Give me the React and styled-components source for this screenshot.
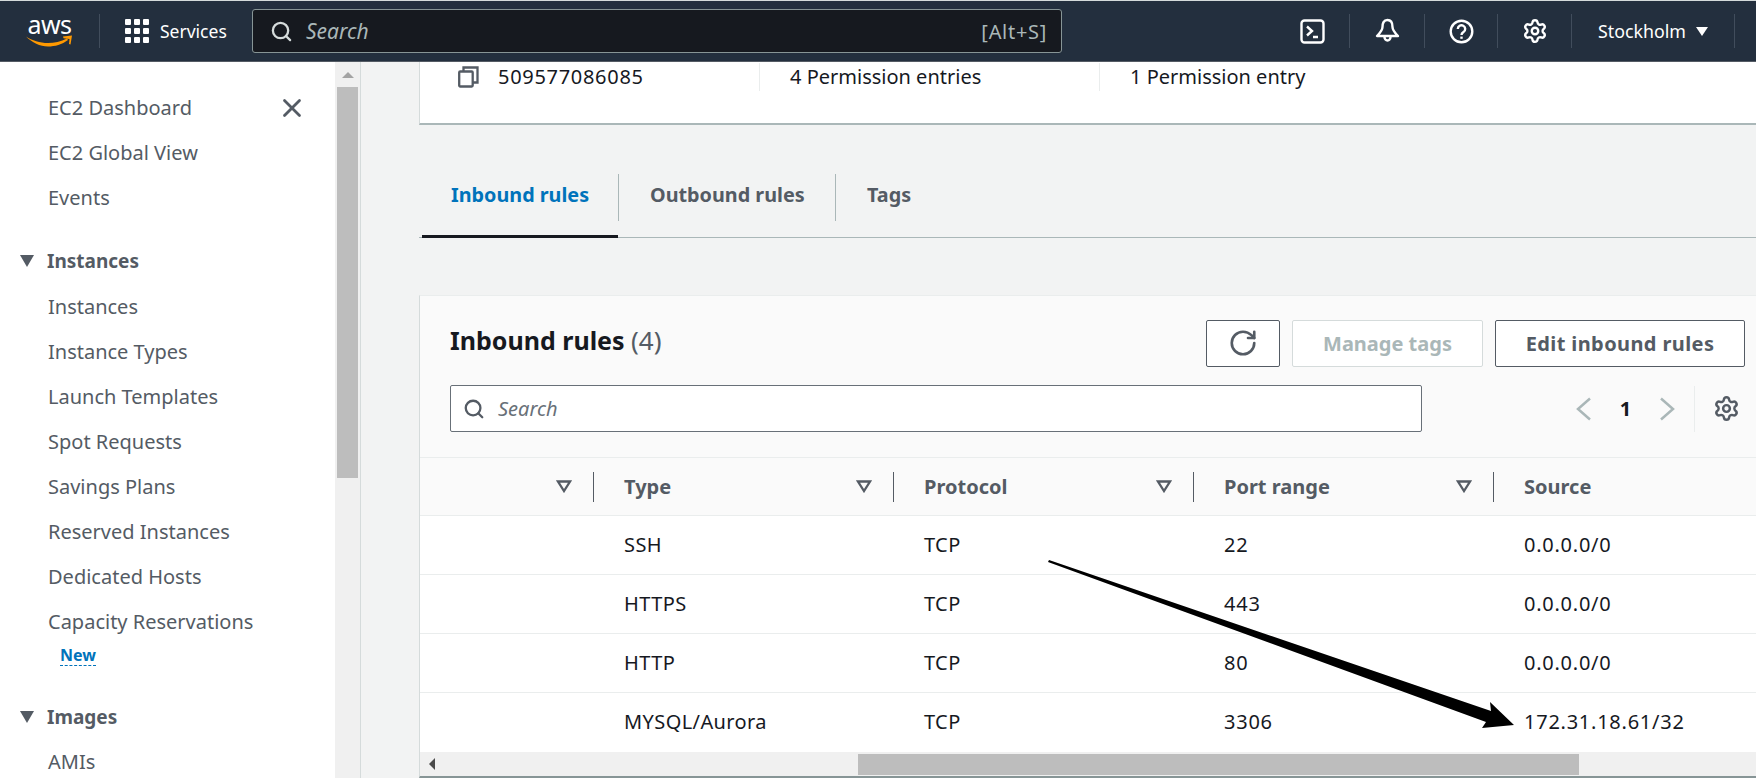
import React from 'react'
import styled, { createGlobalStyle } from 'styled-components'
import { RotateCw, Search, Settings, X } from 'lucide-react'

const GlobalStyle = createGlobalStyle`
  html, body { margin: 0; padding: 0; background: #fff; }
  body { font-family: "Noto Sans", "Open Sans", sans-serif; font-size: 20px; color: #16191f; }
  * { box-sizing: border-box; }
`

const menuTop = ['EC2 Dashboard', 'EC2 Global View', 'Events']
const menuInstances = ['Instances', 'Instance Types', 'Launch Templates', 'Spot Requests', 'Savings Plans', 'Reserved Instances', 'Dedicated Hosts', 'Capacity Reservations']
const columns = ['Type', 'Protocol', 'Port range', 'Source']
const rules = [
  ['SSH', 'TCP', '22', '0.0.0.0/0'],
  ['HTTPS', 'TCP', '443', '0.0.0.0/0'],
  ['HTTP', 'TCP', '80', '0.0.0.0/0'],
  ['MYSQL/Aurora', 'TCP', '3306', '172.31.18.61/32']
]

function TerminalIcon() {
  return (
    <svg width="25" height="25" viewBox="0 0 25 25" fill="none" stroke="#fff" strokeWidth="2.4">
      <rect x="1.5" y="1.5" width="22" height="22" rx="3" />
      <path d="M7 7.5l5 4.5-5 4.5M13 18h5" />
    </svg>
  )
}

function BellIcon() {
  return (
    <svg width="25" height="26" viewBox="0 0 25 26" fill="none" stroke="#fff" strokeWidth="2.4" strokeLinejoin="round">
      <path d="M12.5 2c-4 0-5 3.500-5 7 0 3-2 5.500-5.500 9h21c-3.500-3.500-5.500-6-5.500-9 0-3.500-1-7-5-7z" />
      <path d="M9.500 19a3 3.500 0 0 0 6 0" />
    </svg>
  )
}

function HelpIcon() {
  return (
    <svg width="25" height="25" viewBox="0 0 25 25" fill="none" stroke="#fff" strokeWidth="2.4">
      <circle cx="12.500" cy="12.500" r="10.800" />
      <path d="M8.800 10a3.700 3.700 0 1 1 5.700 3.100c-1.300.8-2 1.400-2 3" />
      <path d="M12.500 17.600v2.200" />
    </svg>
  )
}

function GridIcon() {
  return (
    <svg width="24" height="24" viewBox="0 0 24 24" fill="#fff">
      {[0, 9, 18].flatMap((y) => [0, 9, 18].map((x) => <rect key={`${x}-${y}`} x={x} y={y} width="6" height="6" rx="1" />))}
    </svg>
  )
}

function CopyIcon() {
  return (
    <svg width="21" height="22" viewBox="0 0 21 22" fill="none" stroke="#545b64" strokeWidth="2.300">
      <rect x="1.200" y="5.500" width="13.500" height="15" rx="1" />
      <path d="M5.500 5V1.500h14v15h-4.500" />
    </svg>
  )
}

function AwsLogo() {
  return (
    <LogoWrap>
      <LogoText>aws</LogoText>
      <svg width="47" height="12" viewBox="0 0 47 12" fill="#ff9900">
        <path d="M0 1.500c6 4 14 6.500 22 6.500 6 0 13-1.500 19-4.500l1 1.500C36 9.500 29 11.500 22 11.500 14 11.500 6 7.500 0 1.500z" />
        <path d="M37 1.500l9-1-1.500 9-1.500-.5 .5-5-6-.8z" />
      </svg>
    </LogoWrap>
  )
}

function SortIcon() {
  return (
    <svg width="16" height="13" viewBox="0 0 16 13" fill="none" stroke="#545b64" strokeWidth="2.300" strokeLinejoin="miter">
      <path d="M2 1.500h12l-6 9.500z" />
    </svg>
  )
}

function PagerArrow({ flip }) {
  return (
    <svg width="16" height="24" viewBox="0 0 16 24" fill="none" stroke="#aab7b8" strokeWidth="2.500">
      <path d={flip ? 'M2 1.500 14 12 2 22.500' : 'M14 1.500 2 12 14 22.500'} />
    </svg>
  )
}

function App() {
  return (
    <Page>
      <GlobalStyle />
      <TopNav>
        <AwsLogo />
        <NavDivider $margin="0 25px 0 26px" />
        <GridIcon />
        <ServicesLabel>Services</ServicesLabel>
        <GlobalSearch>
          <Search size={23} color="#d5dbdb" strokeWidth={2.400} />
          <GlobalSearchText>Search</GlobalSearchText>
          <Shortcut>[Alt+S]</Shortcut>
        </GlobalSearch>
        <NavIcons>
          <NavIconCell $width={74}><TerminalIcon /></NavIconCell>
          <NavDivider />
          <NavIconCell $width={74}><BellIcon /></NavIconCell>
          <NavDivider />
          <NavIconCell $width={72}><HelpIcon /></NavIconCell>
          <NavDivider />
          <NavIconCell $width={73}><Settings size={26} color="#fff" strokeWidth={2.200} /></NavIconCell>
          <NavDivider />
          <RegionLabel>Stockholm</RegionLabel>
          <RegionCaret />
          <NavDivider />
        </NavIcons>
      </TopNav>

      <Body>
        <Sidebar>
          <CloseButton><X size={30} color="#545b64" strokeWidth={2.200} /></CloseButton>
          {menuTop.map((item) => <MenuItem key={item}>{item}</MenuItem>)}
          <MenuHeading $gap={18}><HeadingCaret />Instances</MenuHeading>
          <MenuList>
            {menuInstances.map((item) => <MenuItem key={item}>{item}</MenuItem>)}
          </MenuList>
          <NewBadge>New</NewBadge>
          <MenuHeading $gap={28}><HeadingCaret />Images</MenuHeading>
          <MenuItem>AMIs</MenuItem>
        </Sidebar>

        <SideScrollbar>
          <ScrollUp />
          <SideThumb />
        </SideScrollbar>

        <Main>
          <SummaryCard>
            <SummaryOwner><CopyIcon /><Digits>509577086085</Digits></SummaryOwner>
            <SummaryCell $width={340}>4 Permission entries</SummaryCell>
            <SummaryCell>1 Permission entry</SummaryCell>
          </SummaryCard>

          <Tabs>
            <Tab $active $width={197}>Inbound rules</Tab>
            <Tab $width={217}>Outbound rules</Tab>
            <Tab $width={100} $last>Tags</Tab>
          </Tabs>

          <RulesCard>
            <CardHeader>
              <TitleRow>
                <CardTitle>Inbound rules <Count>(4)</Count></CardTitle>
                <Actions>
                  <ActionButton $width={74}><RotateCw size={30} color="#545b64" strokeWidth={2.100} /></ActionButton>
                  <ActionButton $width={191} $disabled>Manage tags</ActionButton>
                  <ActionButton $width={250} $wide>Edit inbound rules</ActionButton>
                </Actions>
              </TitleRow>
              <FilterRow>
                <FilterInput>
                  <Search size={22} color="#545b64" strokeWidth={2.500} />
                  <FilterText>Search</FilterText>
                </FilterInput>
                <Pager>
                  <PagerArrow />
                  <PageNumber>1</PageNumber>
                  <PagerArrow flip />
                </Pager>
                <PagerGear><Settings size={27} color="#545b64" strokeWidth={2.200} /></PagerGear>
              </FilterRow>
            </CardHeader>

            <TableHead>
              <FirstHeadCell><SortIcon /></FirstHeadCell>
              {columns.map((col, i) => (
                <HeadCell key={col}>
                  {col}
                  {i < 3 && <SortWrap><SortIcon /></SortWrap>}
                </HeadCell>
              ))}
            </TableHead>
            {rules.map((rule, r) => (
              <TableRow key={rule[0]} $last={r === rules.length - 1}>
                <span />
                {rule.map((val, i) => <Cell key={i} $numeric={i > 1}>{val}</Cell>)}
              </TableRow>
            ))}

            <HScroll>
              <ScrollLeft />
              <HThumb />
            </HScroll>
          </RulesCard>
        </Main>
      </Body>

      <Arrow viewBox="0 0 1756 778" width="1756" height="778" fill="#000">
        <path d="M1049 560 L1491 711 L1490 702 L1514 725 L1482 728 L1486 722 L1048 562 Z" />
      </Arrow>
    </Page>
  )
}

const Page = styled.div`
  position: relative;
  width: 1756px;
  height: 778px;
  overflow: hidden;
  display: flex;
  flex-direction: column;
  background: #fff;
`

const Arrow = styled.svg`
  position: absolute;
  left: 0;
  top: 0;
  pointer-events: none;
`

const TopNav = styled.header`
  height: 62px;
  flex: none;
  display: flex;
  align-items: center;
  padding-left: 26px;
  background: #232f3e;
  border-top: 1px solid #d5dbdb;
  border-bottom: 1px solid #545b64;
`

const LogoWrap = styled.div`
  width: 47px;
  height: 33px;
  display: flex;
  flex-direction: column;
  align-items: center;
  margin-top: -2px;
`

const LogoText = styled.div`
  height: 21px;
  font-size: 25px;
  line-height: 21px;
  letter-spacing: -0.5px;
  color: #fff;
`

const NavDivider = styled.div`
  width: 1px;
  height: 34px;
  flex: none;
  margin: ${({ $margin }) => $margin || '0'};
  background: #414d5c;
`

const ServicesLabel = styled.span`
  margin-left: 11px;
  width: 92px;
  flex: none;
  font-size: 17.500px;
  color: #fff;
`

const GlobalSearch = styled.div`
  width: 810px;
  height: 44px;
  flex: none;
  display: flex;
  align-items: center;
  padding: 0 14px 0 17px;
  background: #16191f;
  border: 1px solid #879596;
  border-radius: 3px;
`

const GlobalSearchText = styled.span`
  margin-left: 13px;
  flex: 1;
  font-size: 21px;
  font-style: italic;
  color: #aab7b8;
`

const Shortcut = styled.span`
  font-size: 20px;
  letter-spacing: 0.7px;
  color: #aab7b8;
`

const NavIcons = styled.div`
  margin-left: 213px;
  display: flex;
  align-items: center;
`

const NavIconCell = styled.div`
  width: ${({ $width }) => $width}px;
  display: flex;
  justify-content: center;
  align-items: center;
`

const RegionLabel = styled.span`
  margin-left: 26px;
  font-size: 17.800px;
  color: #fff;
`

const RegionCaret = styled.span`
  margin: 0 26px 0 10px;
  width: 0;
  height: 0;
  border-left: 6px solid transparent;
  border-right: 6px solid transparent;
  border-top: 9px solid #fff;
`

const Body = styled.div`
  flex: 1;
  min-height: 0;
  display: flex;
`

const Sidebar = styled.nav`
  position: relative;
  width: 335px;
  flex: none;
  padding-top: 23px;
  overflow: hidden;
  background: #fff;
`

const CloseButton = styled.div`
  position: absolute;
  left: 277px;
  top: 31px;
  display: flex;
`

const MenuList = styled.div`
  padding-top: 1px;
`

const MenuItem = styled.div`
  height: 45px;
  padding-left: 48px;
  display: flex;
  align-items: center;
  font-size: 20px;
  color: #545b64;
  white-space: nowrap;
`

const MenuHeading = styled.div`
  height: 45px;
  margin-top: ${({ $gap }) => $gap}px;
  padding-left: 20px;
  display: flex;
  align-items: center;
  font-size: 19px;
  font-weight: 700;
  color: #545b64;
`

const HeadingCaret = styled.span`
  width: 0;
  height: 0;
  margin-right: 13px;
  border-left: 7.5px solid transparent;
  border-right: 7.5px solid transparent;
  border-top: 12px solid #545b64;
`

const NewBadge = styled.div`
  width: max-content;
  margin: 1px 0 0 60px;
  font-size: 16px;
  line-height: 20px;
  font-weight: 700;
  color: #0073bb;
  border-bottom: 1px dashed #0073bb;
`

const SideScrollbar = styled.div`
  width: 26px;
  flex: none;
  padding: 0 2px;
  background: #f0f0f0;
  border-right: 1px solid #d5dbdb;
`

const ScrollUp = styled.div`
  width: 0;
  height: 0;
  margin: 10px auto 0;
  border-left: 6px solid transparent;
  border-right: 6px solid transparent;
  border-top: none;
  border-bottom: 6px solid #a3a3a3;
`

const SideThumb = styled.div`
  height: 391px;
  margin-top: 9px;
  background: #bdbdbd;
`

const Main = styled.main`
  flex: 1;
  min-width: 0;
  padding-left: 58px;
  background: #f2f3f3;
`

const SummaryCard = styled.section`
  height: 63px;
  padding: 0 0 32px 38px;
  display: flex;
  align-items: center;
  background: #fff;
  border-left: 1px solid #d5dbdb;
  border-bottom: 2px solid #aab7b8;
  font-size: 20px;
`

const SummaryOwner = styled.div`
  width: 301px;
  height: 28px;
  display: flex;
  align-items: center;
  gap: 19px;
  color: #16191f;
`

const Digits = styled.span`
  letter-spacing: 0.7px;
`

const SummaryCell = styled.div`
  width: ${({ $width }) => ($width ? `${$width}px` : 'auto')};
  height: 28px;
  padding-left: 30px;
  display: flex;
  align-items: center;
  border-left: 1px solid #eaeded;
`

const Tabs = styled.div`
  height: 113px;
  margin-bottom: 57px;
  padding: 49px 0 0 3px;
  display: flex;
  align-items: stretch;
  border-bottom: 1px solid #aab7b8;
`

const Tab = styled.div`
  position: relative;
  width: ${({ $width }) => $width}px;
  height: 47px;
  display: flex;
  align-items: center;
  padding: 0 0 6px ${({ $active }) => ($active ? '29px' : '31px')};
  font-size: 19.800px;
  font-weight: 700;
  color: ${({ $active }) => ($active ? '#0073bb' : '#545b64')};
  border-right: ${({ $last }) => ($last ? 'none' : '1px solid #aab7b8')};
  &::after {
    content: '';
    display: ${({ $active }) => ($active ? 'block' : 'none')};
    position: absolute;
    left: 0;
    right: 0;
    bottom: -17px;
    height: 3px;
    background: #16191f;
  }
`

const RulesCard = styled.section`
  height: 483px;
  display: flex;
  flex-direction: column;
  background: #fafafa;
  border-left: 1px solid #d5dbdb;
  border-top: 1px solid #eaeded;
  border-bottom: 2px solid #879596;
`

const CardHeader = styled.div`
  height: 162px;
  flex: none;
  padding: 24px 11px 0 30px;
  border-bottom: 1px solid #eaeded;
`

const TitleRow = styled.div`
  height: 47px;
  display: flex;
  align-items: center;
  justify-content: space-between;
`

const CardTitle = styled.h2`
  margin: -7px 0 0;
  font-size: 25px;
  font-weight: 700;
  color: #16191f;
`

const Count = styled.span`
  font-size: 26px;
  font-weight: 400;
  color: #545b64;
`

const Actions = styled.div`
  display: flex;
  gap: 12px;
`

const ActionButton = styled.div`
  width: ${({ $width }) => $width}px;
  height: 47px;
  padding-bottom: 1px;
  display: flex;
  align-items: center;
  justify-content: center;
  font-size: 20px;
  letter-spacing: ${({ $wide }) => ($wide ? '0.4px' : '0')};
  font-weight: 700;
  background: #fff;
  border-radius: 2px;
  border: 1px solid ${({ $disabled }) => ($disabled ? '#d5dbdb' : '#545b64')};
  color: ${({ $disabled }) => ($disabled ? '#aab7b8' : '#545b64')};
`

const FilterRow = styled.div`
  height: 47px;
  margin-top: 18px;
  display: flex;
  align-items: center;
`

const FilterInput = styled.div`
  width: 972px;
  height: 47px;
  padding-left: 12px;
  display: flex;
  align-items: center;
  background: #fff;
  border: 1px solid #687078;
  border-radius: 2px;
`

const FilterText = styled.span`
  margin-left: 13px;
  font-size: 20px;
  font-style: italic;
  color: #687078;
`

const Pager = styled.div`
  margin-left: 154px;
  width: 99px;
  display: flex;
  align-items: center;
  justify-content: space-between;
`

const PageNumber = styled.span`
  font-size: 20px;
  font-weight: 700;
  color: #16191f;
`

const PagerGear = styled.div`
  height: 46px;
  margin-left: 19px;
  padding-left: 18px;
  display: flex;
  align-items: center;
  border-left: 1px solid #eaeded;
`

const gridColumns = '173px 300px 300px 300px 1fr'

const TableHead = styled.div`
  height: 58px;
  flex: none;
  display: grid;
  grid-template-columns: ${gridColumns};
  align-items: center;
  font-size: 20px;
  font-weight: 700;
  color: #545b64;
  border-bottom: 1px solid #eaeded;
`

const FirstHeadCell = styled.div`
  padding-right: 21px;
  display: flex;
  justify-content: flex-end;
`

const HeadCell = styled.div`
  height: 30px;
  padding: 0 21px 0 30px;
  display: flex;
  align-items: center;
  justify-content: space-between;
  border-left: 1px solid #545b64;
`

const SortWrap = styled.span`
  display: flex;
`

const TableRow = styled.div`
  height: 59px;
  flex: none;
  display: grid;
  grid-template-columns: ${gridColumns};
  align-items: center;
  background: #fff;
  border-bottom: ${({ $last }) => ($last ? 'none' : '1px solid #eaeded')};
`

const Cell = styled.div`
  padding: 0 0 2px 31px;
  font-size: 20px;
  letter-spacing: ${({ $numeric }) => ($numeric ? '0.75px' : '0.4px')};
  color: #16191f;
`

const HScroll = styled.div`
  flex: 1;
  display: flex;
  align-items: center;
  background: #f0f0f0;
`

const ScrollLeft = styled.div`
  width: 0;
  height: 0;
  margin-left: 9px;
  border-top: 6px solid transparent;
  border-bottom: 6px solid transparent;
  border-right: 6px solid #4a4a4a;
`

const HThumb = styled.div`
  width: 721px;
  height: 21px;
  margin-left: 423px;
  background: #bdbdbd;
`

export default App
